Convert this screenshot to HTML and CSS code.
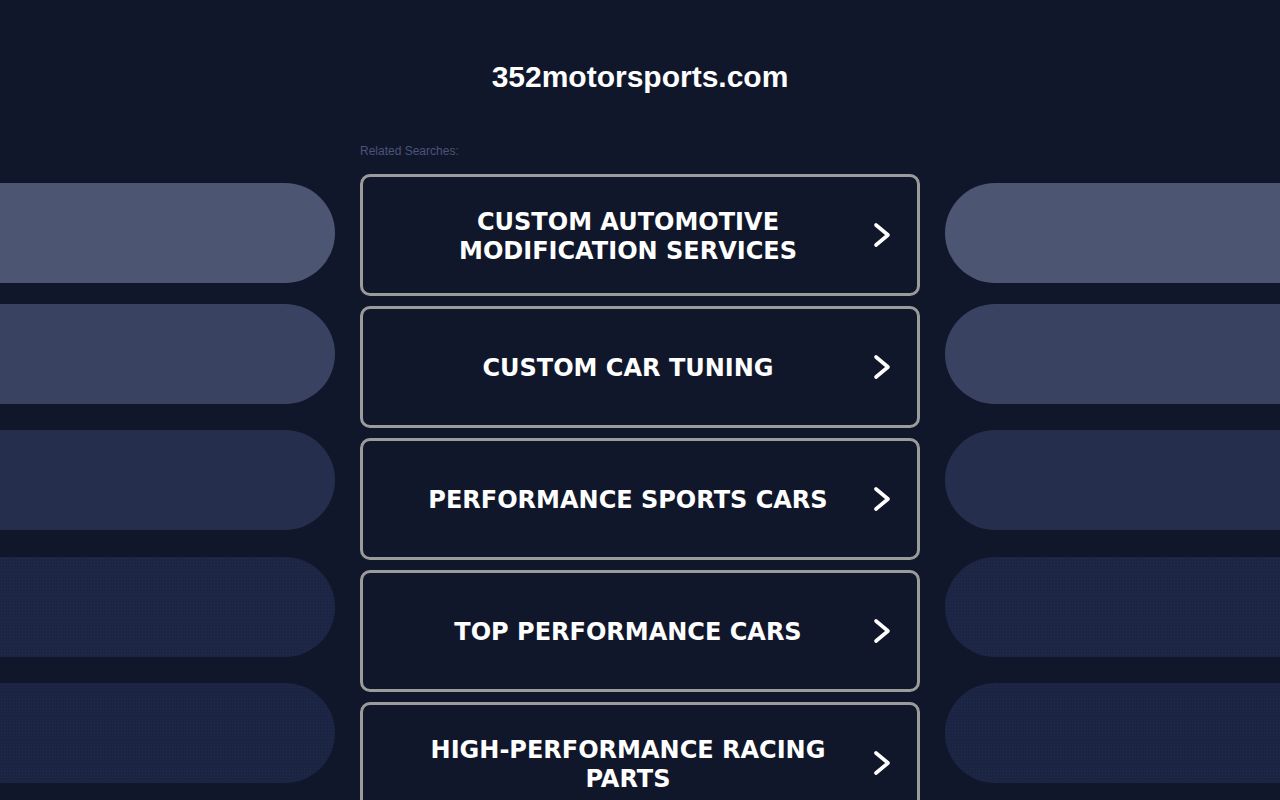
FILE: index.html
```html
<!DOCTYPE html>
<html>
<head>
<meta charset="utf-8">
<title>352motorsports.com</title>
<link rel="stylesheet" href="styles.css">
</head>
<body>
<div class="page">
  <div class="side side-left">
    <div class="pill p1"></div>
    <div class="pill p2"></div>
    <div class="pill p3"></div>
    <div class="pill p4"></div>
    <div class="pill p5"></div>
  </div>
  <div class="center">
    <h1 class="title">352motorsports.com</h1>
    <div class="related">Related Searches:</div>
    <a class="btn" href="#"><span class="btn-text">CUSTOM AUTOMOTIVE MODIFICATION SERVICES</span><svg class="chev" viewBox="0 0 18 26" width="18" height="26"><path d="M3 3 L15 13 L3 23" fill="none" stroke="#fff" stroke-width="3.6" stroke-linecap="round" stroke-linejoin="round"/></svg></a>
    <a class="btn" href="#"><span class="btn-text">CUSTOM CAR TUNING</span><svg class="chev" viewBox="0 0 18 26" width="18" height="26"><path d="M3 3 L15 13 L3 23" fill="none" stroke="#fff" stroke-width="3.6" stroke-linecap="round" stroke-linejoin="round"/></svg></a>
    <a class="btn" href="#"><span class="btn-text">PERFORMANCE SPORTS CARS</span><svg class="chev" viewBox="0 0 18 26" width="18" height="26"><path d="M3 3 L15 13 L3 23" fill="none" stroke="#fff" stroke-width="3.6" stroke-linecap="round" stroke-linejoin="round"/></svg></a>
    <a class="btn" href="#"><span class="btn-text">TOP PERFORMANCE CARS</span><svg class="chev" viewBox="0 0 18 26" width="18" height="26"><path d="M3 3 L15 13 L3 23" fill="none" stroke="#fff" stroke-width="3.6" stroke-linecap="round" stroke-linejoin="round"/></svg></a>
    <a class="btn" href="#"><span class="btn-text">HIGH-PERFORMANCE RACING PARTS</span><svg class="chev" viewBox="0 0 18 26" width="18" height="26"><path d="M3 3 L15 13 L3 23" fill="none" stroke="#fff" stroke-width="3.6" stroke-linecap="round" stroke-linejoin="round"/></svg></a>
  </div>
  <div class="side side-right">
    <div class="pill p1"></div>
    <div class="pill p2"></div>
    <div class="pill p3"></div>
    <div class="pill p4"></div>
    <div class="pill p5"></div>
  </div>
</div>
</body>
</html>
```
FILE: styles.css
```css
html, body {
  margin: 0;
  padding: 0;
  background: #11172b;
  height: 100%;
  overflow: hidden;
}
body {
  font-family: "Liberation Sans", Arial, sans-serif;
  color: #fff;
}
.page {
  display: grid;
  grid-template-columns: 335px 560px 335px;
  column-gap: 25px;
  height: 800px;
}
.side {
  display: flex;
  flex-direction: column;
  padding-top: 183px;
}
.pill {
  height: 100px;
  flex: none;
}
.side-left .pill { border-radius: 0 50px 50px 0; }
.side-right .pill { border-radius: 50px 0 0 50px; }
.pill.p2 { margin-top: 21px; }
.pill.p3 { margin-top: 26px; }
.pill.p4 { margin-top: 27px; }
.pill.p5 { margin-top: 26px; }
.p1 { background: #4c5673; }
.p2 { background: #394260; }
.p3 { background: #252e4c; }
.p4 {
  background-color: #1c2544;
  background-image: radial-gradient(rgba(60,72,110,0.2) 0.6px, transparent 0.8px);
  background-size: 3px 3px;
}
.p5 {
  background-color: #1b2443;
  background-image: radial-gradient(rgba(60,72,110,0.2) 0.6px, transparent 0.8px);
  background-size: 3px 3px;
}
.center {
  padding-top: 59px;
  display: flex;
  flex-direction: column;
}
.title {
  margin: 0;
  font-size: 30px;
  line-height: 36px;
  font-weight: bold;
  text-align: center;
  color: #fff;
}
.related {
  margin-top: 49px;
  font-size: 12px;
  line-height: 14px;
  color: #4a5478;
  margin-bottom: 16px;
}
.btn {
  box-sizing: border-box;
  height: 122px;
  flex: none;
  border: 3px solid #9b9b9b;
  border-radius: 10px;
  margin-bottom: 10px;
  display: flex;
  align-items: center;
  padding: 0 26px 0 20px;
  text-decoration: none;
  color: #fff;
}
.btn-text {
  flex: 1;
  text-align: center;
  font-family: "DejaVu Sans", Verdana, sans-serif;
  font-weight: bold;
  font-size: 24px;
  line-height: 29px;
  padding: 3px 38px 0 38px;
}
.chev {
  flex: none;
  display: block;
}
```
